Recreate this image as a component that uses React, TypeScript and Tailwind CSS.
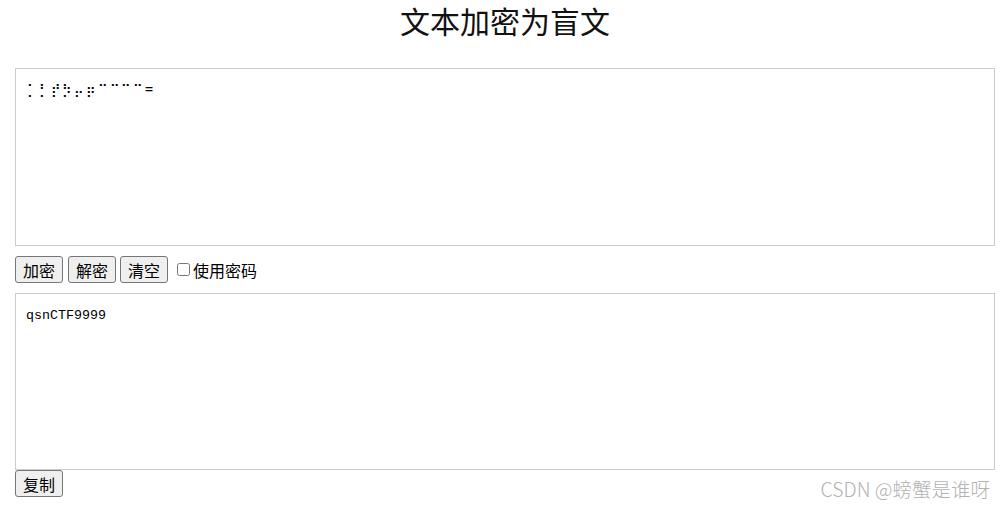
const cjk = "font-['Microsoft_YaHei','Noto_Sans_CJK_SC',sans-serif]";

function Btn({ children, className = "" }: { children: string; className?: string }) {
  return (
    <button className={`h-[27px] w-[48px] rounded-[3px] border border-[#767676] bg-[#efefef] text-[16px] leading-none text-black ${className}`}>
      {children}
    </button>
  );
}

export default function App() {
  return (
    <div className={`relative h-[509px] w-[1007px] bg-white text-black ${cjk}`}>
      <div className="ml-[15px] flex w-[980px] flex-col">
        <h1 className="pb-[28px] text-center text-[30px] leading-[40px] font-normal text-[#111]">文本加密为盲文</h1>
        <textarea
          readOnly
          value={"\u2841\u2843\u285E\u2873\u2864\u2876\u2809\u2809\u2809\u2809="}
          className="h-[178px] w-full resize-none border border-[#ccc] px-[11px] py-[12px] font-['DejaVu_Sans_Mono',monospace] text-[13.33px] leading-[18px] tracking-[1.8px] outline-none"
        />
        <div className="mt-[10px] mb-[10px] flex items-center">
          <Btn>加密</Btn>
          <Btn className="ml-[5px]">解密</Btn>
          <Btn className="ml-[4px]">清空</Btn>
          <label className="ml-[9px] flex items-center text-[16px] leading-[26px]">
            <input type="checkbox" className="m-0 h-[13px] w-[13px]" />
            <span className="ml-[3px]">使用密码</span>
          </label>
        </div>
        <textarea
          readOnly
          value="qsnCTF9999"
          className="h-[177px] w-full resize-none border border-[#ccc] px-[10px] py-[13px] font-['Liberation_Mono',monospace] text-[13.33px] leading-[18px] outline-none"
        />
        <div className="flex">
          <Btn>复制</Btn>
        </div>
      </div>
      <span className="absolute top-[476px] right-[17px] text-[19.5px] leading-[26px] font-light text-[#b2b2b2]">CSDN @螃蟹是谁呀</span>
    </div>
  );
}
